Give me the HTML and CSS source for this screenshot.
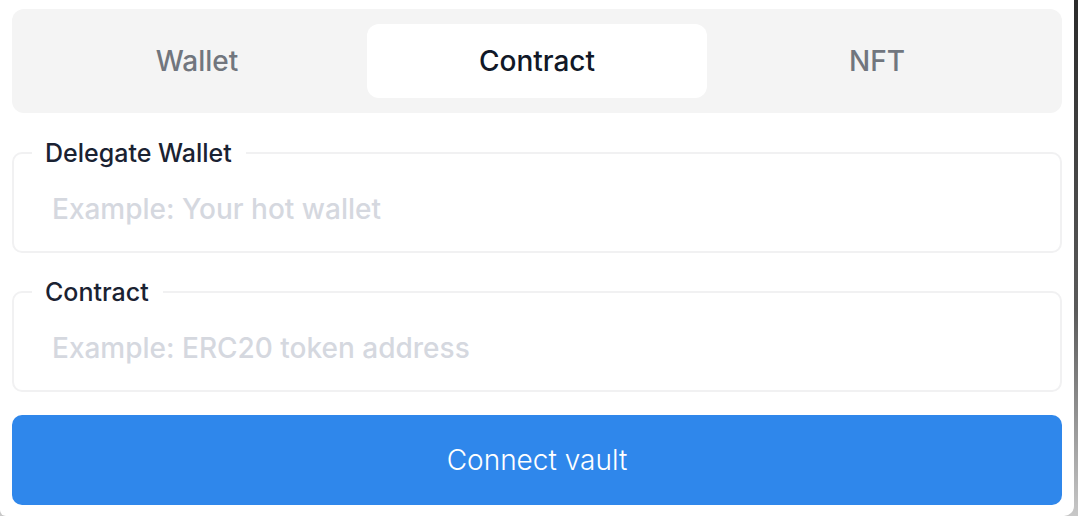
FILE: index.html
```html
<!DOCTYPE html>
<html lang="en">
<head>
<meta charset="utf-8">
<title>Connect vault</title>
<link rel="stylesheet" href="styles.css">
</head>
<body>
<div class="modal">
  <div class="tabs">
    <button class="tab">Wallet</button>
    <button class="tab active">Contract</button>
    <button class="tab">NFT</button>
  </div>
  <fieldset class="field">
    <legend class="label">Delegate Wallet</legend>
    <input class="input" type="text" placeholder="Example: Your hot wallet">
  </fieldset>
  <fieldset class="field">
    <legend class="label">Contract</legend>
    <input class="input" type="text" placeholder="Example: ERC20 token address">
  </fieldset>
  <button class="submit">Connect vault</button>
</div>
</body>
</html>
```

FILE: styles.css
```css
* { box-sizing: border-box; }
html, body { margin: 0; height: 100%; }
body {
  background: linear-gradient(to bottom, #2b2b2b 0%, #5a5a5a 60%, #c8c8c8 100%);
  font-family: Inter, "Noto Sans", sans-serif;
  overflow: hidden;
}
.modal {
  width: 1074px;
  height: 516px;
  background: #ffffff;
  border-bottom-left-radius: 6px;
  border-bottom-right-radius: 10px;
  padding: 9px 12px 0 12px;
  display: flex;
  flex-direction: column;
}
.tabs {
  background: #f4f4f4;
  border-radius: 12px;
  padding: 15px;
  display: grid;
  grid-template-columns: 1fr 1fr 1fr;
  height: 104px;
}
.tab {
  border: none;
  background: transparent;
  border-radius: 12px;
  font-family: inherit;
  font-size: 28px;
  font-weight: 500;
  color: #71767e;
  cursor: pointer;
  padding: 0;
}
.tab.active {
  background: #ffffff;
  color: #111827;
}
.field {
  margin: 26px 0 0 0;
  border: 2px solid #f1f1f2;
  border-radius: 10px;
  padding: 0 18px;
  display: block;
  min-width: 0;
}
.field + .field { margin-top: 25px; }
.label {
  padding: 0 14px 0 13px;
  font-size: 25px;
  font-weight: 500;
  color: #1a2232;
  line-height: 28px;
}
.input {
  display: block;
  width: 100%;
  height: 84px;
  border: none;
  outline: none;
  background: transparent;
  font-family: inherit;
  font-size: 28px;
  font-weight: 500;
  color: #1a2232;
  padding: 0 0 0 20px;
  margin: 0;
}
.input::placeholder { color: #d5d8df; }
.submit {
  margin-top: 23px;
  height: 90px;
  border: none;
  border-radius: 10px;
  background: #2f87eb;
  color: #ffffff;
  font-family: Inter, "Noto Sans", sans-serif;
  font-size: 28px;
  font-weight: 300;
  cursor: pointer;
}
```
